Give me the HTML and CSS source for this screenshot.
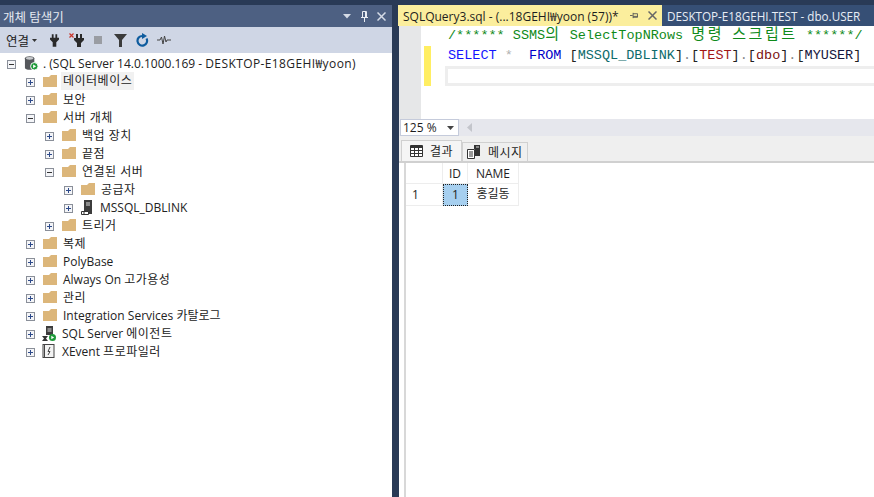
FILE: index.html
```html
<!DOCTYPE html>
<html lang="ko">
<head>
<meta charset="utf-8">
<title>SSMS</title>
<link rel="stylesheet" href="styles.css">
</head>
<body>
<svg class="defs" width="0" height="0" aria-hidden="true">
  <symbol id="plus" viewBox="0 0 9 9"><rect x=".5" y=".5" width="8" height="8" fill="#f4f5f8" stroke="#8a8f99"/><path d="M2 4.500h5M4.500 2v5" stroke="#2d4a8a"/></symbol>
  <symbol id="minus" viewBox="0 0 9 9"><rect x=".5" y=".5" width="8" height="8" fill="#f4f5f8" stroke="#8a8f99"/><path d="M2 4.500h5" stroke="#333"/></symbol>
  <symbol id="folder" viewBox="0 0 14 12"><path d="M0 2h6l2-2h6v12H0z" fill="#dcb67a"/></symbol>
</svg>
<div class="app">
  <section class="explorer">
    <header class="title">
      <span class="title-text">개체 탐색기</span>
      <span class="title-btns">
        <svg class="menu-arrow" width="8" height="5" viewBox="0 0 8 5"><path d="M0 0h8L4 4.500z" fill="#d5dbe6"/></svg>
        <svg width="7" height="11" viewBox="0 0 7 11"><path d="M1.500.5h4v6h-4zM0 6.500h7M3.500 7v4M4.500 1v5" fill="none" stroke="#e8ecf3"/></svg>
        <svg width="9" height="9" viewBox="0 0 9 9"><path d="M.5.5l8 8M8.500.5l-8 8" stroke="#d5dbe6" stroke-width="1.500"/></svg>
      </span>
    </header>
    <div class="toolbar">
      <span class="connect">연결</span>
      <svg class="caret" width="5" height="3" viewBox="0 0 5 3"><path d="M0 0h5L2.500 3z" fill="#333"/></svg>
      <svg class="tool-plug" width="9" height="13" viewBox="0 0 10 14"><path d="M2 0h2v4H2zM6 0h2v4H6zM0 4h10v2L7 9v5H3V9L0 6z" fill="#2a2a2a"/></svg>
      <svg class="tool-unplug" width="15" height="14" viewBox="0 0 15 14"><path d="M7 1h2v4H7zM11 1h2v4h-2zM5 5h10v2l-3 3v4H8v-4L5 7z" fill="#2a2a2a"/><path d="M.5.5l4 4M4.500.5l-4 4" stroke="#c8352b" stroke-width="1.200"/></svg>
      <span class="tool-stop"></span>
      <svg class="tool-filter" width="13" height="13" viewBox="0 0 13 13"><path d="M0 0h13L8 6v7H5V6z" fill="#3b3b3b"/></svg>
      <svg class="tool-refresh" width="13" height="14" viewBox="0 0 13 14"><path d="M10.500 5.500A4.800 4.800 0 1 1 6.500 3" fill="none" stroke="#0e5c9e" stroke-width="2.200"/><path d="M6 0l5 3-5 3z" fill="#0e5c9e"/></svg>
      <svg class="tool-activity" width="14" height="10" viewBox="0 0 14 10"><path d="M0 5h3l1.500-3L6 9l1.500-8L9 7l1-2h4" fill="none" stroke="#444"/></svg>
    </div>
    <div class="tree">
      <div class="row l0"><svg class="exp"><use href="#minus"/></svg>
        <svg class="ico ico-root" width="15" height="16" viewBox="0 0 16 16"><path d="M1 3c0-3 10-3 10 0v10c0 3-10 3-10 0z" fill="#55585c"/><ellipse cx="6" cy="3" rx="4" ry="1.500" fill="#c9cbce"/><circle cx="11" cy="11.500" r="4" fill="#1f9a3a" stroke="#fff"/><path d="M9.700 9.500l3.300 2-3.300 2z" fill="#fff"/></svg>
        <span class="label root-label">. (SQL Server 14.0.1000.169 - <span class="login">DESKTOP-E18GEHI₩yoon)</span></span></div>
      <div class="row l1"><svg class="exp"><use href="#plus"/></svg><svg class="ico folder"><use href="#folder"/></svg><span class="label selected ko">데이터베이스</span></div>
      <div class="row l1"><svg class="exp"><use href="#plus"/></svg><svg class="ico folder"><use href="#folder"/></svg><span class="label ko">보안</span></div>
      <div class="row l1"><svg class="exp"><use href="#minus"/></svg><svg class="ico folder"><use href="#folder"/></svg><span class="label ko">서버 개체</span></div>
      <div class="row l2"><svg class="exp"><use href="#plus"/></svg><svg class="ico folder"><use href="#folder"/></svg><span class="label ko">백업 장치</span></div>
      <div class="row l2"><svg class="exp"><use href="#plus"/></svg><svg class="ico folder"><use href="#folder"/></svg><span class="label ko">끝점</span></div>
      <div class="row l2"><svg class="exp"><use href="#minus"/></svg><svg class="ico folder"><use href="#folder"/></svg><span class="label ko">연결된 서버</span></div>
      <div class="row l3"><svg class="exp"><use href="#plus"/></svg><svg class="ico folder"><use href="#folder"/></svg><span class="label ko">공급자</span></div>
      <div class="row l3"><svg class="exp"><use href="#plus"/></svg>
        <svg class="ico ico-link" width="12" height="15" viewBox="0 0 12 15"><path d="M3 0h8v14H3z" fill="#3c3c3c"/><path d="M5 3h4M5 5h4" stroke="#ddd"/><path d="M.5 11.500h7v3h-7z" fill="#fff" stroke="#333"/><path d="M3 11.500v3" stroke="#333"/></svg>
        <span class="label label-db">MSSQL_DBLINK</span></div>
      <div class="row l2"><svg class="exp"><use href="#plus"/></svg><svg class="ico folder"><use href="#folder"/></svg><span class="label ko">트리거</span></div>
      <div class="row l1"><svg class="exp"><use href="#plus"/></svg><svg class="ico folder"><use href="#folder"/></svg><span class="label ko">복제</span></div>
      <div class="row l1"><svg class="exp"><use href="#plus"/></svg><svg class="ico folder"><use href="#folder"/></svg><span class="label">PolyBase</span></div>
      <div class="row l1"><svg class="exp"><use href="#plus"/></svg><svg class="ico folder"><use href="#folder"/></svg><span class="label">Always On <span class="ko">고가용성</span></span></div>
      <div class="row l1"><svg class="exp"><use href="#plus"/></svg><svg class="ico folder"><use href="#folder"/></svg><span class="label ko">관리</span></div>
      <div class="row l1"><svg class="exp"><use href="#plus"/></svg><svg class="ico folder"><use href="#folder"/></svg><span class="label">Integration Services 카탈로그</span></div>
      <div class="row l1"><svg class="exp"><use href="#plus"/></svg>
        <svg class="ico" width="14" height="15" viewBox="0 0 14 15"><path d="M4 0h7v9H4z" fill="#3c3c3c"/><path d="M5.500 3h4M5.500 5h4" stroke="#ddd"/><path d="M0 10h6L4 12.500 6 15H0l2-2.500z" fill="#333"/><circle cx="10.500" cy="11.500" r="3.500" fill="#1f9a3a"/><path d="M9.300 9.800l2.800 1.700-2.800 1.700z" fill="#fff"/></svg>
        <span class="label">SQL Server <span class="ko">에이전트</span></span></div>
      <div class="row l1"><svg class="exp"><use href="#plus"/></svg>
        <svg class="ico" width="13" height="14" viewBox="0 0 13 14"><rect x="1" y=".5" width="11" height="13" fill="#f3f3f3" stroke="#444"/><path d="M2.500 1v12" stroke="#444"/><path d="M8 3L6 7.500h2L6 11" fill="none" stroke="#444"/></svg>
        <span class="label label-xe">XEvent <span class="ko">프로파일러</span></span></div>
    </div>
  </section>
  <main class="workspace">
    <nav class="tabs">
      <div class="tab active"><span>SQLQuery3.sql - (...18GEHI₩yoon (57))*</span>
        <svg class="pin" width="8" height="7" viewBox="0 0 9 7"><path d="M0 3.500h3M3.500.5v6M3.500 1.500h5v4h-5M3.500 4.500h5" fill="none" stroke="#555"/></svg>
        <svg class="close" width="9" height="9" viewBox="0 0 9 9"><path d="M.5.5l8 8M8.500.5l-8 8" stroke="#666" stroke-width="1.500"/></svg>
      </div>
      <div class="tab inactive">DESKTOP-E18GEHI.TEST - dbo.USER</div>
    </nav>
    <div class="editor">
      <div class="gutter"></div>
      <div class="marks"><span class="mark"></span></div>
      <div class="code">
        <div class="line c-comment">/****** SSMS<span class="wide">의</span> SelectTopNRows <span class="wide">명령</span> <span class="wide">스크립트</span> ******/</div>
        <div class="line"><span class="c-kw">SELECT</span> <span class="c-star">*</span>  <span class="c-kw2">FROM</span> <span class="c-br">[</span><span class="c-teal">MSSQL_DBLINK</span><span class="c-br">]</span><span class="c-dot">.</span><span class="c-br">[</span><span class="c-red">TEST</span><span class="c-br">]</span><span class="c-dot">.</span><span class="c-br">[</span><span class="c-maroon">dbo</span><span class="c-br">]</span><span class="c-dot">.</span><span class="c-br">[</span><span class="c-navy">MYUSER</span><span class="c-br">]</span></div>
        <div class="current"></div>
      </div>
    </div>
    <div class="statusbar">
      <div class="zoom"><span>125 %</span><svg width="7" height="4" viewBox="0 0 7 4"><path d="M0 0h7L3.500 4z" fill="#444"/></svg></div>
      <svg class="scroll-left" width="5" height="9" viewBox="0 0 5 9"><path d="M5 0v9L0 4.500z" fill="#c3c5cb"/></svg>
    </div>
    <div class="result-tabs">
      <div class="rtab on">
        <svg width="13" height="12" viewBox="0 0 13 12"><path d="M.5.5h12v11H.5z" fill="#fff" stroke="#333"/><path d="M0 1h13v2H0z" fill="#333"/><path d="M4.500 3v8M8.500 3v8M1 5.500h11M1 8.500h11" stroke="#333"/></svg>
        <span class="ko">결과</span>
      </div>
      <div class="rtab off">
        <svg width="14" height="14" viewBox="0 0 14 14"><path d="M.5 4.500h7v9h-7z" fill="#fff" stroke="#333"/><path d="M2 7h4M2 9h4M2 11h4" stroke="#333"/><path d="M7 0h6v11H8V4H7z" fill="#333"/><path d="M9 2h3" stroke="#ddd"/></svg>
        <span class="ko">메시지</span>
      </div>
    </div>
    <div class="results">
      <div class="grid">
        <div class="cell corner"></div><div class="cell head">ID</div><div class="cell head">NAME</div>
        <div class="cell num">1</div><div class="cell sel">1</div><div class="cell val">홍길동</div>
      </div>
    </div>
  </main>
</div>
</body>
</html>
```
FILE: styles.css
```css
* { box-sizing: border-box; }
html, body { margin: 0; height: 100%; }
body {
  background: #293a56;
  font-family: "Open Sans", "Noto Sans CJK KR", sans-serif;
  font-size: 12px;
  color: #1e1e1e;
  overflow: hidden;
}
.defs { position: absolute; }
.ko { letter-spacing: .5px; }
.app {
  display: grid;
  grid-template-columns: 392px 1fr;
  column-gap: 6px;
  height: 497px;
  padding-top: 5px;
}
.explorer { display: flex; flex-direction: column; min-width: 0; }
.title {
  height: 22px;
  background: #4d6082;
  color: #e6eaf2;
  display: flex;
  align-items: center;
  justify-content: space-between;
  padding: 0 6px 0 3px;
  font-size: 12.5px;
}
.title-btns { display: flex; align-items: center; gap: 9px; }
.menu-arrow { margin-right: 1px; }
.toolbar {
  height: 26px;
  background: #cfd6e5;
  display: flex;
  align-items: center;
  padding-left: 6px;
}
.connect { font-size: 12.5px; color: #222; }
.caret { margin-left: 3px; }
.tool-plug { margin-left: 13px; }
.tool-unplug { margin-left: 10px; }
.tool-stop { width: 8px; height: 8px; background: #9a9da3; margin-left: 10px; }
.tool-filter { margin-left: 12px; }
.tool-refresh { margin-left: 9px; }
.tool-activity { margin-left: 8px; }
.tree { flex: 1; background: #fff; padding-top: 1px; }
.row { height: 18px; display: flex; align-items: center; white-space: nowrap; }
.l0 { padding-left: 7px; }
.l1 { padding-left: 26px; }
.l2 { padding-left: 45px; }
.l3 { padding-left: 64px; }
.exp { width: 9px; height: 9px; flex: none; margin-top: 2px; }
.ico { flex: none; margin-left: 7px; }
.folder { width: 14px; height: 12px; margin-left: 8px; margin-top: -1px; }
.ico-root { margin-left: 8px; margin-top: -1px; }
.ico-link { margin-left: 8px; }
.label { padding: 0 1px; margin-left: 5px; line-height: 17px; color: #222; }
.root-label { margin-left: 3px; }
.label-db { margin-left: 6px; }
.label-xe { margin-left: 6px; }
.login { letter-spacing: .4px; }
.selected { background: #f1f1f1; padding: 0 2px; margin-left: 4px; line-height: 18px; }
.workspace { display: flex; flex-direction: column; min-width: 0; }
.tabs { height: 21px; display: flex; flex: none; }
.tab { display: flex; align-items: center; white-space: nowrap; }
.active {
  width: 264px;
  background: #fbee9d;
  color: #1e1e1e;
  padding-left: 5px;
}
.pin { margin-left: 11px; }
.close { margin-left: 10px; }
.inactive { padding-left: 5px; background: #364f75; flex: 1; color: #e8edf5; font-size: 11.7px; }
.editor { height: 93px; flex: none; display: flex; background: #fff; margin-left: 1px; }
.gutter { width: 22px; background: #e6e7e8; }
.marks { width: 7px; margin-left: 3px; padding-top: 20px; }
.mark { display: block; width: 7px; height: 40px; background: #ffee62; }
.code {
  flex: 1;
  font-family: "Liberation Mono", "Noto Sans CJK KR", monospace;
  font-size: 13.5px;
  min-width: 0;
}
.line { height: 20px; line-height: 20px; padding-left: 17px; white-space: pre; }
.wide { font-size: 15px; letter-spacing: 2.6px; }
.current { border: 3px solid #eeeeee; border-right: 0; margin-left: 14px; height: 20px; }
.c-comment { color: #0f8a1a; }
.c-kw { color: #1414ff; }
.c-kw2 { color: #0000c8; }
.c-star { color: #b0b0b0; }
.c-br { color: #222; }
.c-dot { color: #888; }
.c-teal { color: #0d6b6b; }
.c-red { color: #a31515; }
.c-maroon { color: #7a1010; }
.c-navy { color: #14143c; }
.statusbar { height: 17px; flex: none; background: #e6e7ed; display: flex; align-items: center; margin-left: 1px; padding-left: 1px; }
.zoom {
  width: 59px;
  height: 17px;
  background: #fff;
  border: 1px solid #c5cbdb;
  display: flex;
  align-items: center;
  justify-content: space-between;
  padding: 0 4px 0 2px;
}
.scroll-left { margin-left: 8px; }
.result-tabs {
  height: 27px;
  flex: none;
  background: #efefef;
  display: flex;
  align-items: flex-end;
  margin-left: 1px;
  padding-left: 2px;
  border-bottom: 2px solid #d0d0d0;
}
.rtab {
  display: flex;
  align-items: center;
  border: 1px solid #d0d0d0;
  border-bottom: 0;
}
.on { background: #f5f5f5; height: 21px; width: 61px; padding-left: 8px; gap: 7px; }
.off { height: 19px; width: 66px; padding-left: 4px; gap: 7px; }
.results { flex: 1; background: #fff; margin-left: 1px; padding-left: 5px; }
.grid {
  display: grid;
  grid-template-columns: 37px 25px 51px;
  grid-template-rows: 21px 22px;
  width: 115px;
  height: 100%;
  align-content: start;
  border-left: 2px solid #d8d8d8;
}
.cell { border-right: 1px solid #ededed; border-bottom: 1px solid #ededed; line-height: 21px; white-space: nowrap; }
.head { text-align: center; }
.num { padding-left: 6px; }
.sel { background: #a6cfef; border: 1px dotted #222; text-align: center; line-height: 19px; }
.val { text-align: center; line-height: 20px; }
```
